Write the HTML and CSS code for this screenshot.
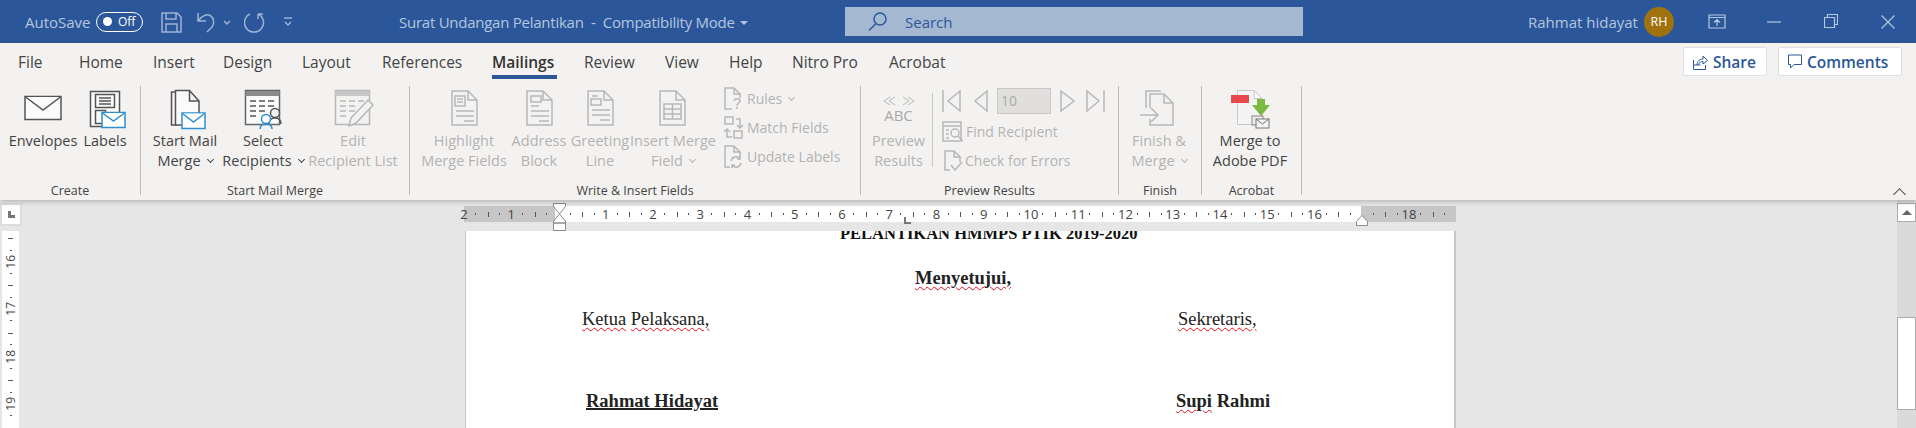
FILE: index.html
```html
<!DOCTYPE html>
<html lang="en">

<head>
    <meta charset="UTF-8">
    <meta name="viewport" content="width=device-width, initial-scale=1.0">
    <title>Surat Undangan Pelantikan - Compatibility Mode</title>
    <link rel="stylesheet" href="styles.css">
</head>

<body>
    <header class="titlebar">
        <span class="autosave">AutoSave</span>
        <span class="toggle"><i class="knob"></i><span>Off</span></span>
        <svg class="qat" width="36" height="22" viewBox="0 0 36 22">
            <path d="M1 2h15l4 4v15H1zM5 2v6h10V2M5 21v-8h11v8" />
        </svg>
        <svg class="qat" width="47" height="22" viewBox="0 0 47 22">
            <path d="M1 2v8h8M1 10C5 5 9 3 12 4c5 2 6 8 3 12l-5 5M27 10l3 3 3-3" />
        </svg>
        <svg class="qat" width="40" height="22" viewBox="0 0 40 22">
            <path d="M6 3a9.500 9.500 0 1 0 8 0M14 3h5M14 3v5" />
        </svg>
        <svg class="qat" width="8" height="22" viewBox="0 0 8 22">
            <path d="M0 7h8M1 11l3 3 3-3" />
        </svg>
        <div class="doc-name">Surat Undangan Pelantikan&nbsp; -&nbsp; Compatibility Mode<i class="caret"></i></div>
        <div class="search">
            <svg width="19" height="19" viewBox="0 0 19 19">
                <circle cx="12" cy="7" r="6" />
                <path d="M8 11.500 1 18.500" />
            </svg>
            <span>Search</span>
        </div>
        <div class="user">Rahmat hidayat</div>
        <div class="avatar">RH</div>
        <div class="winctl">
            <svg width="18" height="15" viewBox="0 0 18 15">
                <path d="M1 1h16v13H1zM1 3.500h16M9 12V6M6 8.500l3-3 3 3" />
            </svg>
        </div>
        <div class="winctl">
            <svg width="14" height="15" viewBox="0 0 14 15">
                <path d="M0 8h14" />
            </svg>
        </div>
        <div class="winctl">
            <svg width="14" height="15" viewBox="0 0 14 15">
                <path d="M.5 3.500h10v10H.5zM3.500 3.500V.5h10v10h-3" />
            </svg>
        </div>
        <div class="winctl">
            <svg width="14" height="14" viewBox="0 0 14 14">
                <path d="M.5.5l13 13M13.500.5l-13 13" />
            </svg>
        </div>
    </header>

    <section class="ribbon">
        <nav class="tabs">
            <a class="tab t-file">File</a>
            <a class="tab t-home">Home</a>
            <a class="tab t-insert">Insert</a>
            <a class="tab t-design">Design</a>
            <a class="tab t-layout">Layout</a>
            <a class="tab t-refs">References</a>
            <a class="tab t-mail active">Mailings</a>
            <a class="tab t-review">Review</a>
            <a class="tab t-view">View</a>
            <a class="tab t-help">Help</a>
            <a class="tab t-nitro">Nitro Pro</a>
            <a class="tab t-acro">Acrobat</a>
            <div class="share-btns">
                <button class="pill share">
                    <svg width="15" height="17" viewBox="0 0 15 17">
                        <path d="M.5 7v9.500h12V12M.5 12h7M4 12c0-4 3-6 6-6V3l4.500 4.500L10 11V8.500c-2 0-4 1-4.500 3" />
                    </svg>
                    Share
                </button>
                <button class="pill comments">
                    <svg width="14" height="15" viewBox="0 0 14 15">
                        <path d="M.5 1h13v9.500H6L2.500 14v-3.500h-2z" />
                    </svg>
                    Comments
                </button>
            </div>
        </nav>

        <div class="groups">
            <div class="group g-create">
                <div class="group-body">
                    <div class="rbtn w78">
                        <svg class="bigicon" width="44" height="44" viewBox="0 0 44 44">
                            <rect class="dk" x="4" y="8.500" width="36" height="23" />
                            <path class="dk" d="M4.500 9 22 22 39.500 9" />
                        </svg>
                        <span>Envelopes</span>
                    </div>
                    <div class="rbtn w46">
                        <svg class="bigicon" width="44" height="44" viewBox="0 0 44 44">
                            <rect class="dk" x="7.500" y="3.500" width="29" height="35" />
                            <path class="dk" d="M12.500 6.500h19v13h-19zM16 10h12M16 13h12M16 16h12M12.500 22.500h10v13h-10z" />
                            <rect class="blue" x="19" y="24.500" width="23" height="15" />
                            <path class="blue" d="M19.500 25 30.500 33 41.500 25" />
                        </svg>
                        <span>Labels</span>
                    </div>
                </div>
                <div class="group-label">Create</div>
            </div>

            <div class="group g-start">
                <div class="group-body">
                    <div class="rbtn w80">
                        <svg class="bigicon" width="44" height="44" viewBox="0 0 44 44">
                            <path class="dk nofill" d="M14 4H8.500v33H14" />
                            <path class="dk" d="M12.500 2.500h14L36 13v24H12.500zM26.500 2.500V13H36" />
                            <rect class="blue" x="19" y="25" width="23" height="15.500" />
                            <path class="blue" d="M19.500 25.500 30.500 34 41.500 25.500" />
                        </svg>
                        <span>Start Mail</span>
                        <span>Merge<i class="chev"></i></span>
                    </div>
                    <div class="rbtn w76">
                        <svg class="bigicon" width="44" height="44" viewBox="0 0 44 44">
                            <path class="gridbg" d="M4.500 2.500h34v34h-34z" />
                            <path class="hd" d="M4.500 3h34v5h-34z" />
                            <path class="dk nofill" d="M9 13h6M18 13h6M27 13h6M9 18h6M18 18h6M27 18h6M9 23h6M18 23h6M9 28h6" />
                            <path class="dk nofill" d="M28 36c0-5 3-6 6-6s6 1 6 6" />
                            <circle class="dk white" cx="34" cy="25" r="4.500" />
                            <path class="blue nofill" d="M19 41c0-4 3-5 6-5s6 1 6 5" />
                            <circle class="blue" cx="25" cy="31" r="4.500" />
                        </svg>
                        <span>Select</span>
                        <span>Recipients<i class="chev"></i></span>
                    </div>
                    <div class="rbtn w104 off">
                        <svg class="bigicon" width="44" height="44" viewBox="0 0 44 44">
                            <path class="gray" d="M4.500 2.500h34v34h-34z" />
                            <path class="hdoff" d="M4.500 3h34v5h-34z" />
                            <path class="gray" d="M9 13h6M18 13h6M27 13h6M9 18h6M18 18h6M9 23h6M18 23h6M9 28h6" />
                            <path class="gray fillbg" d="M18 38l2-8 17-18 5 5-17 18z" />
                        </svg>
                        <span>Edit</span>
                        <span>Recipient List</span>
                    </div>
                </div>
                <div class="group-label">Start Mail Merge</div>
            </div>

            <div class="group g-write">
                <div class="group-body">
                    <div class="rbtn w92 off">
                        <svg class="bigicon" width="44" height="44" viewBox="0 0 44 44">
                            <path class="gray" d="M10 3h16l9 9v25H10zM26 3v9h9" />
                            <path class="gray" d="M13 8h10v10H13zM15 11h6M15 14h6M14 23h18M14 28h18M22 33h10" />
                        </svg>
                        <span>Highlight</span>
                        <span>Merge Fields</span>
                    </div>
                    <div class="rbtn w58 off">
                        <svg class="bigicon" width="44" height="44" viewBox="0 0 44 44">
                            <path class="gray" d="M10 3h16l9 9v25H10zM26 3v9h9" />
                            <path class="gray" d="M14 8h10v6H14zM14 18h8M14 23h18M14 28h18M22 33h10" />
                        </svg>
                        <span>Address</span>
                        <span>Block</span>
                    </div>
                    <div class="rbtn w64 off">
                        <svg class="bigicon" width="44" height="44" viewBox="0 0 44 44">
                            <path class="gray" d="M10 3h16l9 9v25H10zM26 3v9h9" />
                            <path class="gray" d="M14 8h6M13 11h10v6H13zM14 22h18M14 27h18M22 32h10" />
                        </svg>
                        <span>Greeting</span>
                        <span>Line</span>
                    </div>
                    <div class="rbtn w82 off">
                        <svg class="bigicon" width="44" height="44" viewBox="0 0 44 44">
                            <path class="gray" d="M9 3h16l9 9v25H9zM25 3v9h9" />
                            <path class="gray" d="M13 16h17v15H13zM13 21h17M13 26h17M21.500 16v15" />
                        </svg>
                        <span>Insert Merge</span>
                        <span>Field<i class="chev"></i></span>
                    </div>
                    <div class="smallcol">
                        <div class="smallbtn r-rules">
                            <svg width="19" height="23" viewBox="0 0 19 23">
                                <path class="gray" d="M8 22H1V1h9l6 6h-6V1M16 7v4" />
                                <path class="gray" d="M10 14c1-3 6-3 6 0 0 2-3 2-3 5M13 20v2" />
                            </svg>
                            <span>Rules<i class="chev"></i></span>
                        </div>
                        <div class="smallbtn r-match">
                            <svg width="19" height="23" viewBox="0 0 19 23">
                                <path class="gray" d="M1 1h8v7H1zM10 15h8v7h-8zM12 3h4v8M13 9l3 3 3-3M8 21H3v-7M0 16l3-3 3 3" />
                            </svg>
                            <span>Match Fields</span>
                        </div>
                        <div class="smallbtn r-update">
                            <svg width="19" height="23" viewBox="0 0 19 23">
                                <path class="gray" d="M6 22H1V1h9l6 6h-6V1M16 7v4" />
                                <path class="gray" d="M7 16a5 5 0 0 1 9-2M16 11v3h-3M17 18a5 5 0 0 1-9 2M8 23v-3h3" />
                            </svg>
                            <span>Update Labels</span>
                        </div>
                    </div>
                </div>
                <div class="group-label">Write &amp; Insert Fields</div>
            </div>

            <div class="group g-preview">
                <div class="group-body">
                    <div class="rbtn w65 off">
                        <div class="abc-icon">
                            <svg width="34" height="10" viewBox="0 0 34 10">
                                <path class="gray thin" d="M8 1 2 5l6 4M13 1 7 5l6 4M21 1l6 4-6 4M26 1l6 4-6 4" />
                            </svg>
                            <span>ABC</span>
                        </div>
                        <span>Preview</span>
                        <span>Results</span>
                    </div>
                    <div class="innersep"></div>
                    <div class="navcol">
                        <div class="navrow">
                            <svg width="19" height="26" viewBox="0 0 19 26">
                                <path class="gray" d="M1 2v22M18 3 6 13l12 10z" />
                            </svg>
                            <svg class="nav-prev" width="15" height="26" viewBox="0 0 15 26">
                                <path class="gray" d="M14 3 2 13l12 10z" />
                            </svg>
                            <span class="recno">10</span>
                            <svg class="nav-next" width="15" height="26" viewBox="0 0 15 26">
                                <path class="gray" d="M1 3l13 10L1 23z" />
                            </svg>
                            <svg class="nav-last" width="19" height="26" viewBox="0 0 19 26">
                                <path class="gray" d="M18 2v22M1 3l12 10L1 23z" />
                            </svg>
                        </div>
                        <div class="smallbtn nav-find">
                            <svg width="21" height="21" viewBox="0 0 21 21">
                                <path class="gray" d="M1 1h18v19H1zM1 5h18M4 9h3M4 13h3M4 17h3" />
                                <circle class="gray fillbg" cx="13" cy="12" r="4" />
                                <path class="gray" d="M16 15l5 5" />
                            </svg>
                            <span>Find Recipient</span>
                        </div>
                        <div class="smallbtn nav-check">
                            <svg width="19" height="21" viewBox="0 0 19 21">
                                <path class="gray" d="M6 20H1V1h9l6 6h-6V1M16 7v5M7 15l4 5 7-8" />
                            </svg>
                            <span>Check for Errors</span>
                        </div>
                    </div>
                </div>
                <div class="group-label">Preview Results</div>
            </div>

            <div class="group g-finish">
                <div class="group-body">
                    <div class="rbtn w80 off">
                        <svg class="bigicon" width="44" height="44" viewBox="0 0 44 44">
                            <path class="gray" d="M9 20V3h15M13 20V6h14l9 9v22H13v-6M27 6v9h9M3 27h17M14 20l7 7-7 7" />
                        </svg>
                        <span>Finish &amp;</span>
                        <span>Merge<i class="chev"></i></span>
                    </div>
                </div>
                <div class="group-label">Finish</div>
            </div>

            <div class="group g-acro">
                <div class="group-body">
                    <div class="rbtn w96">
                        <svg class="bigicon" width="44" height="44" viewBox="0 0 44 44">
                            <path fill="#f4f4f4" stroke="#c8c8c8" d="M9.500 2.500H26l8 8v26H9.500z" />
                            <path fill="#fff" stroke="#c8c8c8" d="M26 2.500v8h8z" />
                            <rect x="3" y="7" width="18" height="8" fill="#e8484d" />
                            <path fill="#7cb93f" d="M29 11h8v6h5l-9 11-9-11h5z" />
                            <rect x="24" y="28" width="11" height="9" fill="#eee" stroke="#888" />
                            <rect x="28" y="31" width="13" height="9" fill="#f4f4f4" stroke="#777" />
                            <path fill="none" stroke="#777" d="M28 31l6.500 5 6.500-5" />
                        </svg>
                        <span>Merge to</span>
                        <span>Adobe PDF</span>
                    </div>
                </div>
                <div class="group-label">Acrobat</div>
            </div>
        </div>

        <i class="collapse"></i>
    </section>

    <main class="workspace">
        <aside class="rail">
            <div class="corner"><i class="corner-l"></i></div>
            <div class="vruler">
                <div class="vcell"><span>16</span></div>
                <div class="vcell"><span>17</span></div>
                <div class="vcell"><span>18</span></div>
                <div class="vcell"><span>19</span></div>
            </div>
        </aside>

        <div class="center">
            <div class="ruler">
                <div class="rcells">
                    <span class="rcell">2</span>
                    <span class="rcell">1</span>
                    <span class="rcell"></span>
                    <span class="rcell">1</span>
                    <span class="rcell">2</span>
                    <span class="rcell">3</span>
                    <span class="rcell">4</span>
                    <span class="rcell">5</span>
                    <span class="rcell">6</span>
                    <span class="rcell">7</span>
                    <span class="rcell">8</span>
                    <span class="rcell">9</span>
                    <span class="rcell">10</span>
                    <span class="rcell">11</span>
                    <span class="rcell">12</span>
                    <span class="rcell">13</span>
                    <span class="rcell">14</span>
                    <span class="rcell">15</span>
                    <span class="rcell">16</span>
                    <span class="rcell"></span>
                    <span class="rcell">18</span>
                    <span class="rcell"></span>
                </div>
                <svg class="marker m-left" width="13" height="28" viewBox="0 0 13 28">
                    <path d="M.5.5h12v3L6.500 11 .5 3.500zM6.500 11l6 7v2H.5v-2zM.5 20h12v7.500H.5z" />
                </svg>
                <svg class="marker m-right" width="12" height="11" viewBox="0 0 12 11">
                    <path d="M6 .5l5.500 6v4H.5v-4z" />
                </svg>
                <i class="marker m-tab"></i>
            </div>
            <article class="page">
                <p class="doc-title">PELANTIKAN HMMPS PTIK 2019-2020</p>
                <p class="approve"><span class="sp">Menyetujui,</span></p>
                <div class="signs">
                    <p class="role"><span class="sp">Ketua</span> <span class="sp">Pelaksana,</span></p>
                    <p class="role role-r"><span class="sp">Sekretaris,</span></p>
                    <p class="signer chair">Rahmat Hidayat</p>
                    <p class="signer"><span class="sp">Supi</span> Rahmi</p>
                </div>
            </article>
        </div>

        <aside class="scrollbar">
            <div class="sb-up"><i></i></div>
            <div class="sb-thumb"></div>
        </aside>
    </main>
</body>

</html>
```

FILE: styles.css
```css
* {
    box-sizing: border-box;
}

html,
body {
    margin: 0;
    height: 428px;
    overflow: hidden;
}

body {
    font-family: "Open Sans", "Noto Sans", sans-serif;
    background: #e6e6e6;
    color: #444;
}

/* title bar */
.titlebar {
    display: flex;
    align-items: center;
    height: 43px;
    background: #2b579a;
    color: #b4c6df;
    font-size: 15px;
}

.titlebar > * {
    flex: none;
}

.autosave {
    width: 71px;
    margin-left: 25px;
    white-space: nowrap;
}

.toggle {
    display: flex;
    align-items: center;
    width: 47px;
    height: 20px;
    margin-right: 18px;
    padding-left: 6px;
    border: 1.5px solid #fff;
    border-radius: 10px;
    color: #fff;
    font-size: 12px;
}

.knob {
    width: 9px;
    height: 9px;
    margin-right: 6px;
    border-radius: 50%;
    background: #fff;
}

.qat path {
    fill: none;
    stroke: #9db3d3;
    stroke-width: 1.5;
}

.doc-name {
    width: 553px;
    padding-left: 107px;
    letter-spacing: -0.25px;
    white-space: nowrap;
}

.caret {
    display: inline-block;
    margin-left: 5px;
    vertical-align: 3px;
    border-top: 4px solid #b4c6df;
    border-left: 4px solid transparent;
    border-right: 4px solid transparent;
}

.search {
    display: flex;
    align-items: center;
    width: 458px;
    height: 29px;
    padding-left: 23px;
    background: #a4b8d2;
    color: #2b579a;
}

.search svg {
    margin-right: 18px;
    fill: none;
    stroke: #2b579a;
    stroke-width: 1.5;
}

.user {
    width: 116px;
    margin-left: 225px;
    white-space: nowrap;
}

.avatar {
    display: flex;
    justify-content: center;
    align-items: center;
    width: 30px;
    height: 30px;
    margin-right: 14px;
    border-radius: 50%;
    background: #a0720d;
    color: #fff;
    font-size: 12.5px;
}

.winctl {
    display: flex;
    justify-content: center;
    align-items: center;
    width: 57px;
}

.winctl svg {
    fill: none;
    stroke: #b4c6df;
    stroke-width: 1.2;
}

/* ribbon */
.ribbon {
    position: relative;
    z-index: 2;
    height: 157px;
    background: #f3f2f1;
    box-shadow: 0 2px 5px rgba(0, 0, 0, 0.2);
}

.tabs {
    display: flex;
    height: 37px;
    padding: 0 14px 0 18px;
    font-size: 15.5px;
}

.tab {
    position: relative;
    flex: none;
    padding-top: 8px;
    color: #444;
    white-space: nowrap;
}

.t-file { width: 61px; }
.t-home { width: 74px; }
.t-insert { width: 70px; }
.t-design { width: 79px; }
.t-layout { width: 80px; }
.t-refs { width: 110px; }
.t-mail { width: 92px; }
.t-review { width: 81px; }
.t-view { width: 64px; }
.t-help { width: 63px; }
.t-nitro { width: 97px; }
.t-acro { width: 60px; }

.active {
    font-weight: 600;
    color: #333;
}

.active::after {
    content: "";
    position: absolute;
    left: 0;
    top: 32px;
    width: 65px;
    height: 4px;
    background: #2b579a;
}

.share-btns {
    display: flex;
    gap: 11px;
    margin-left: auto;
    padding-top: 4px;
}

.pill {
    display: flex;
    align-items: center;
    gap: 5px;
    height: 29px;
    padding: 0;
    border: 1px solid #e1dfdd;
    border-radius: 2px;
    background: #fff;
    color: #2b579a;
    font-family: inherit;
    font-size: 15.5px;
    font-weight: 600;
}

.pill svg {
    fill: none;
    stroke: #2b579a;
    stroke-width: 1;
}

.share {
    width: 84px;
    padding-left: 9px;
}

.comments {
    width: 124px;
    padding-left: 9px;
}

.groups {
    display: flex;
    height: 109px;
    margin-top: 6px;
}

.group {
    display: flex;
    flex-direction: column;
    flex: none;
    border-right: 1px solid #bdbdbd;
}

.g-create { width: 141px; }
.g-start { width: 269px; }
.g-write { width: 451px; }
.g-preview { width: 258px; }
.g-finish { width: 83px; }
.g-acro { width: 100px; }

.g-create .group-body { padding-left: 4px; }
.g-start .group-body { padding-left: 4px; }
.g-write .group-body { padding-left: 8px; }
.g-preview .group-body { padding-left: 5px; }

.group-body {
    display: flex;
    height: 95px;
    padding-top: 2px;
}

.group-label {
    height: 14px;
    line-height: 20px;
    font-size: 12.5px;
    text-align: center;
    color: #444;
    white-space: nowrap;
}

.rbtn {
    display: flex;
    flex-direction: column;
    align-items: center;
    flex: none;
    font-size: 14.5px;
    line-height: 20px;
    white-space: nowrap;
}

.bigicon {
    flex: none;
    margin-bottom: -1px;
    fill: none;
}

.w46 { width: 46px; }
.w58 { width: 58px; }
.w64 { width: 64px; }
.w65 { width: 65px; }
.w76 { width: 76px; }
.w78 { width: 78px; }
.w80 { width: 80px; }
.w82 { width: 82px; }
.w92 { width: 92px; }
.w96 { width: 96px; }
.w104 { width: 104px; }

.off {
    color: #b3b2b1;
}

.dk {
    fill: #fbfbfb;
    stroke: #555;
    stroke-width: 1.5;
}

.white {
    fill: #f3f2f1;
}

.blue {
    fill: #fff;
    stroke: #2e8fd0;
    stroke-width: 1.5;
}

.nofill {
    fill: none;
}

.gridbg {
    fill: #fbfbfb;
    stroke: #666;
    stroke-width: 1.5;
}

.hd {
    fill: #8c8c8c;
}

.hdoff {
    fill: #c6c6c6;
}

.gray {
    fill: none;
    stroke: #b8b8b8;
    stroke-width: 1.5;
}

.fillbg {
    fill: #f3f2f1;
}

.thin {
    stroke-width: 1;
}

.chev {
    display: inline-block;
    width: 5px;
    height: 5px;
    margin-left: 7px;
    border-right: 1px solid currentColor;
    border-bottom: 1px solid currentColor;
    vertical-align: 4px;
    transform: rotate(45deg);
}

.smallcol {
    display: flex;
    flex-direction: column;
    margin-left: 10px;
    margin-top: -4px;
}

.smallbtn {
    display: flex;
    align-items: center;
    gap: 4px;
    color: #b3b2b1;
    font-size: 14px;
    white-space: nowrap;
}

.smallbtn svg {
    flex: none;
}

.r-rules,
.r-match,
.r-update {
    height: 29px;
}

.abc-icon {
    display: flex;
    flex-direction: column;
    align-items: center;
    height: 43px;
    padding-top: 8px;
    color: #a9a9a9;
    font-size: 15px;
    line-height: 18px;
}

.innersep {
    width: 1px;
    height: 74px;
    margin: 5px 9px 0 1px;
    background: #c8c8c8;
}

.navcol {
    display: flex;
    flex-direction: column;
}

.navrow {
    display: flex;
    align-items: center;
    height: 26px;
    margin-bottom: 3px;
}

.nav-prev {
    margin-left: 12px;
}

.recno {
    width: 54px;
    height: 26px;
    margin: 0 9px;
    padding-left: 3px;
    border: 1px solid #c8c8c8;
    background: #e1dfdd;
    color: #a9a9a9;
    font-size: 14px;
    line-height: 24px;
}

.nav-last {
    margin-left: 11px;
}

.nav-find {
    height: 28px;
    gap: 3px;
}

.nav-check {
    height: 30px;
    padding-left: 2px;
    gap: 2px;
}

.collapse {
    position: absolute;
    right: 12px;
    bottom: 1px;
    width: 9px;
    height: 9px;
    border-left: 1.3px solid #444;
    border-top: 1.3px solid #444;
    transform: rotate(45deg);
}

/* document area */
.workspace {
    display: flex;
    height: 228px;
    overflow: hidden;
    background: #e6e6e6;
}

.rail {
    flex: none;
    width: 22px;
    padding-top: 3px;
}

.corner {
    display: flex;
    justify-content: center;
    align-items: center;
    width: 22px;
    height: 23px;
    border: 2px solid #dcdcdc;
    background: #fff;
}

.corner-l {
    width: 7px;
    height: 7px;
    border-left: 3px solid #777;
    border-bottom: 3px solid #777;
}

.vruler {
    width: 17px;
    height: 197px;
    margin: 5px 0 0 2px;
    padding-top: 7px;
    overflow: hidden;
    background: #fff;
}

.vcell {
    display: flex;
    justify-content: center;
    align-items: center;
    height: 47.4px;
    color: #444;
    font-size: 12px;
    background:
        linear-gradient(#555, #555) center top / 5px 1px no-repeat,
        linear-gradient(#555, #555) center 25% / 2px 1px no-repeat,
        linear-gradient(#555, #555) center 75% / 2px 1px no-repeat;
}

.vcell span {
    writing-mode: vertical-rl;
    transform: rotate(180deg);
    line-height: 1;
}

.center {
    flex: 1;
    min-width: 0;
}

.ruler {
    position: relative;
    width: 992px;
    height: 16px;
    margin: 6px 0 0 442px;
    background: linear-gradient(to right, #c6c6c6 91px, #fff 91px, #fff 897px, #c6c6c6 897px);
}

.rcells {
    display: flex;
    margin-left: -23.6px;
    width: 1015.6px;
    overflow: hidden;
}

.rcell {
    flex: none;
    width: 47.25px;
    height: 16px;
    line-height: 16px;
    text-align: center;
    font-size: 13px;
    color: #444;
    background:
        linear-gradient(#555, #555) left center / 1px 5px no-repeat,
        linear-gradient(#555, #555) 25% center / 1px 2px no-repeat,
        linear-gradient(#555, #555) 75% center / 1px 2px no-repeat;
}

.rcell:first-child {
    background: linear-gradient(#555, #555) 75% center / 1px 2px no-repeat;
}

.marker {
    position: absolute;
}

.marker path {
    fill: #fff;
    stroke: #8a8a8a;
}

.m-left {
    left: 89px;
    top: -3px;
}

.m-right {
    left: 892px;
    top: 9px;
}

.m-tab {
    left: 440px;
    top: 11px;
    width: 7px;
    height: 7px;
    border-left: 2px solid #777;
    border-bottom: 2px solid #777;
}

.page {
    width: 991px;
    height: 210px;
    margin: 9px 0 0 443px;
    padding-left: 116px;
    overflow: hidden;
    border-left: 1px solid #c6c6c6;
    border-right: 2px solid #c6c6c6;
    background: #fff;
    color: #222;
    font-family: "Liberation Serif", "Times New Roman", serif;
    font-size: 18.5px;
    line-height: 21px;
}

.page p {
    margin: 0;
}

.page .doc-title {
    margin-top: -8px;
    padding-left: 258px;
    color: #111;
    font-size: 16.5px;
    font-weight: bold;
    white-space: nowrap;
}

.page .approve {
    margin-top: 24px;
    padding-left: 333px;
    font-weight: bold;
}

.signs {
    display: grid;
    grid-template-columns: 594px 1fr;
    row-gap: 61px;
    margin-top: 20px;
}

.role-r {
    padding-left: 2px;
}

.signer {
    font-weight: bold;
}

.chair {
    padding-left: 4px;
    text-decoration: underline;
    text-decoration-thickness: 2px;
}

.sp {
    text-decoration: underline wavy #e81123 1px;
    text-underline-offset: 2px;
}

.scrollbar {
    flex: none;
    width: 19px;
    padding-top: 3px;
    background: #dadada;
}

.sb-up {
    display: flex;
    justify-content: center;
    align-items: center;
    height: 19px;
    border: 1px solid #ababab;
    background: #fff;
}

.sb-up i {
    border-bottom: 5px solid #666;
    border-left: 5px solid transparent;
    border-right: 5px solid transparent;
}

.sb-thumb {
    height: 93px;
    margin-top: 95px;
    border: 1px solid #ababab;
    background: #fff;
}
```
